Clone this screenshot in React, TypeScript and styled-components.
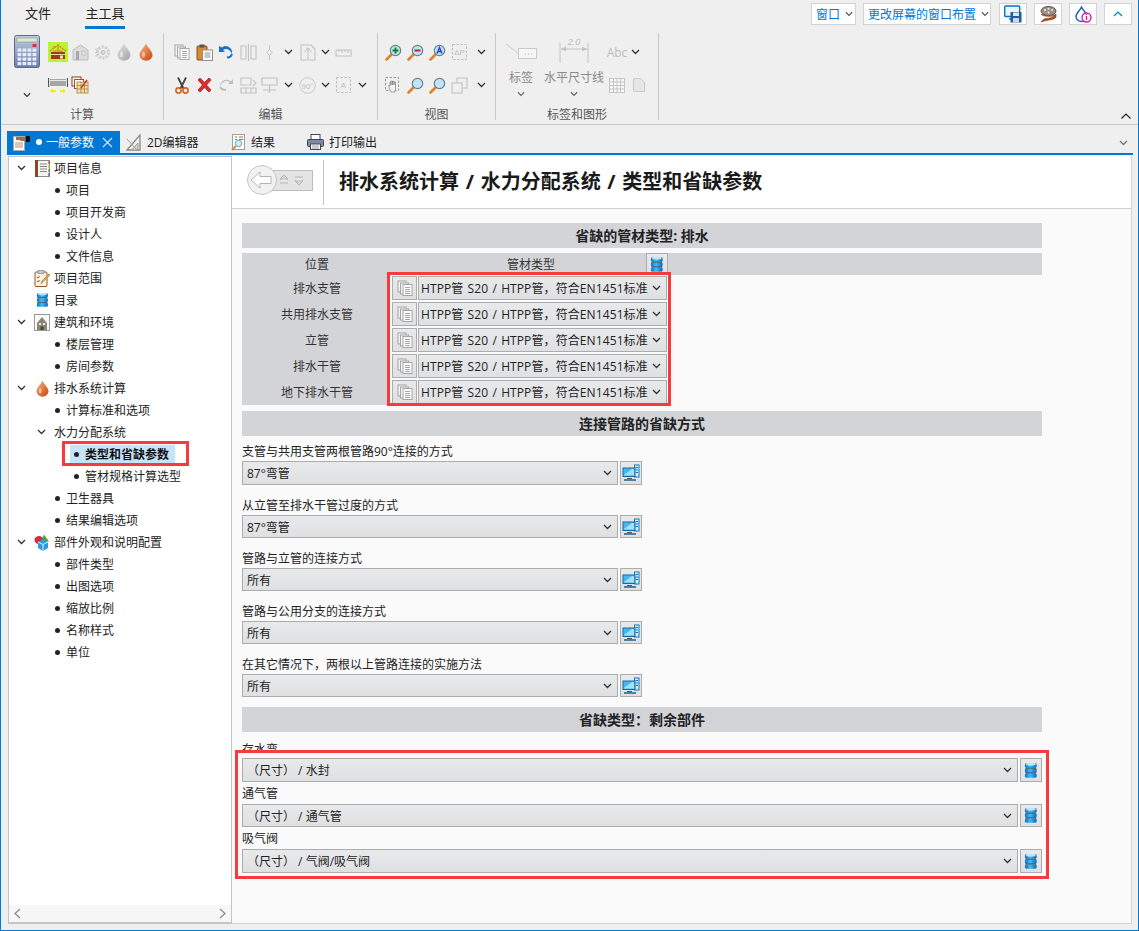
import React from 'react'
import styled, { createGlobalStyle } from 'styled-components'

const GlobalStyle = createGlobalStyle`
  html, body { margin: 0; padding: 0; background: #efefef; }
  body { font-family: "Open Sans", "Noto Sans CJK SC", sans-serif; font-size: 12px; color: #222; }
  * { box-sizing: border-box; }
  svg { display: block; flex: none; }
`

const Window = styled.div`
  width: 1139px;
  height: 931px;
  position: relative;
  border: 1px solid #0078d4;
  border-top: 0;
  background: #efefef;
  display: flex;
  flex-direction: column;
  overflow: hidden;
`

/* top menu */
const MenuBar = styled.div`
  height: 30px;
  display: flex;
  padding: 0 6px 0 24px;
  justify-content: space-between;
`
const MenuTabs = styled.div`
  display: flex;
  gap: 34px;
`
const MenuTab = styled.div<{ $active?: boolean }>`
  height: 29px;
  line-height: 27px;
  font-size: 13px;
  border-bottom: 3px solid ${p => (p.$active ? '#0078d4' : 'transparent')};
  width: ${p => (p.$active ? '40px' : '26px')};
  text-align: center;
  white-space: nowrap;
`
const TopActions = styled.div`
  display: flex;
  padding-top: 3px;
  gap: 7px;
`
const TopDrop = styled.div<{ $w: number; $last?: boolean }>`
  width: ${p => p.$w}px;
  height: 22px;
  margin-right: ${p => (p.$last ? '1px' : '0')};
  background: #fff;
  border: 1px solid #d3d3d3;
  color: #0078d4;
  display: flex;
  align-items: center;
  padding: 0 4px;
  gap: 5px;
  white-space: nowrap;
`
const TopIconBtn = styled.div`
  width: 28px;
  height: 22px;
  background: #fff;
  border: 1px solid #d3d3d3;
  display: flex;
  align-items: center;
  justify-content: center;
`

/* ribbon */
const Ribbon = styled.div`
  height: 95px;
  display: flex;
  border-bottom: 1px solid #c8c8c8;
  position: relative;
`
const RibbonGroup = styled.div<{ $w: number }>`
  width: ${p => p.$w}px;
  margin: 3px 0 4px;
  border-right: 1px solid #c8c8c8;
  display: flex;
  flex-direction: column;
`
const GroupBody = styled.div<{ $pad: number }>`
  height: 68px;
  flex: none;
  padding: 2px 0 0 ${p => p.$pad}px;
  display: flex;
`
const GroupLabel = styled.div`
  height: 16px;
  flex: none;
  margin-top: 6px;
  line-height: 16px;
  text-align: center;
  color: #555;
`
const IconGrid = styled.div<{ $cols: string; $left?: number }>`
  display: grid;
  grid-template-columns: ${p => p.$cols};
  grid-auto-rows: 22px;
  row-gap: 11px;
  margin: 6px 0 0 ${p => p.$left ?? 0}px;
  height: 55px;
`
const Slot = styled.div<{ $start?: boolean; $muted?: boolean }>`
  display: flex;
  align-items: center;
  justify-content: ${p => (p.$start ? 'flex-start' : 'center')};
  padding-left: ${p => (p.$start ? '3px' : '0')};
  color: ${p => (p.$muted ? '#bdbdbd' : 'inherit')};
`
const BigColumn = styled.div<{ $w: number }>`
  width: ${p => p.$w}px;
  display: flex;
  flex-direction: column;
  align-items: center;
  color: #8a8a8a;
  white-space: nowrap;
`
const BigIcon = styled.div`
  height: 32px;
  display: flex;
  align-items: center;
`
const BigText = styled.div`
  height: 20px;
  margin-top: 1px;
  line-height: 20px;
`
const BigChevron = styled.div<{ $gap?: number }>`
  height: 12px;
  margin-top: ${p => p.$gap ?? 0}px;
  display: flex;
  align-items: center;
`
const CollapseBtn = styled.div`
  position: absolute;
  right: 7px;
  bottom: 5px;
`

/* document tabs */
const TabBar = styled.div`
  margin: 6px 5px 0 6px;
  height: 24px;
  display: flex;
  align-items: flex-end;
  border-bottom: 2px solid #0078d4;
  position: relative;
`
const DocTab = styled.div<{ $w: number; $active?: boolean }>`
  width: ${p => p.$w}px;
  height: 22px;
  display: flex;
  align-items: center;
  gap: 5px;
  padding-left: 6px;
  white-space: nowrap;
  background: ${p => (p.$active ? '#0078d4' : 'transparent')};
  color: ${p => (p.$active ? '#fff' : '#222')};
`
const TabDot = styled.span`
  width: 6px;
  height: 6px;
  border-radius: 50%;
  background: #fff;
  margin-left: 1px;
  margin-right: -1px;
  flex: none;
`
const TabClose = styled.span`
  margin-left: 3px;
  display: flex;
`
const TabMenu = styled.div`
  position: absolute;
  right: 5px;
  bottom: 7px;
`

/* work area */
const Workspace = styled.div`
  flex: 1;
  display: flex;
  margin: 1px 5px 6px 7px;
  min-height: 0;
`
const Tree = styled.div`
  width: 224px;
  background: #fff;
  border: 1px solid #c4c4c4;
  border-width: 1px 1px 2px 1px;
  display: flex;
  flex-direction: column;
  justify-content: space-between;
`
const TreeRow = styled.div<{ $indent: number }>`
  height: 22px;
  display: flex;
  align-items: center;
  padding-left: ${p => p.$indent}px;
  white-space: nowrap;
`
const TreeChevron = styled.div`
  width: 12px;
  display: flex;
  justify-content: center;
`
const TreeIcon = styled.div`
  width: 18px;
  margin-left: 6px;
  margin-right: 3px;
  display: flex;
  justify-content: center;
`
const Bullet = styled.span`
  width: 5px;
  height: 5px;
  border-radius: 50%;
  background: #222;
  margin-right: 6px;
  flex: none;
`
const SubLabel = styled.span`
  margin-left: 7px;
`
const ActiveItem = styled.div`
  height: 19px;
  width: 105px;
  display: flex;
  align-items: center;
  padding-left: 4px;
  background: #c5e3f9;
  font-weight: 700;
  color: #111;
`
const HScroll = styled.div`
  height: 17px;
  background: #f7f7f7;
  display: flex;
  align-items: center;
  justify-content: space-between;
  padding: 0 5px;
`

const Main = styled.div`
  width: 900px;
  position: relative;
  background: #fafafa;
  border-right: 1px solid #d4d4d4;
  border-bottom: 1px solid #d4d4d4;
`
const Header = styled.div`
  height: 53px;
  background: #fff;
  border-bottom: 1px solid #cfcfcf;
  display: flex;
  align-items: center;
  padding: 0 0 4px 15px;
`
const HeaderDivider = styled.div`
  width: 1px;
  height: 45px;
  background: #c4c4c4;
  margin: 4px 15px 0 10px;
`
const Title = styled.h1`
  margin: 0;
  font-size: 20px;
  font-weight: 700;
  color: #1a1a1a;
  white-space: nowrap;
  word-spacing: 1.5px;
`
const Form = styled.div`
  width: 810px;
  padding: 14px 0 0 10px;
`
const SectionHead = styled.div`
  height: 25px;
  background: #d3d4d8;
  font-size: 14px;
  font-weight: 700;
  line-height: 25px;
  text-align: center;
  color: #222;
`
const TableHead = styled.div`
  margin-top: 5px;
  height: 22px;
  background: #d3d4d8;
  display: flex;
  align-items: center;
`
const HeadCell = styled.div<{ $w: number; $pad: number }>`
  width: ${p => p.$w}px;
  padding-left: ${p => p.$pad}px;
  text-align: center;
  color: #333;
`
const TableRow = styled.div`
  height: 26px;
  display: flex;
  align-items: center;
`
const RowLabel = styled.div`
  width: 145px;
  height: 26px;
  line-height: 27px;
  background: #d3d4d8;
  padding-left: 5px;
  margin-right: 5px;
  text-align: center;
  color: #333;
`
const SquareBtn = styled.div<{ $w: number; $h: number }>`
  width: ${p => p.$w}px;
  height: ${p => p.$h}px;
  border: 1px solid #acacac;
  background: linear-gradient(#e8e9eb, #dfe0e2);
  display: flex;
  align-items: center;
  justify-content: center;
  flex: none;
`
const Select = styled.div<{ $w: number; $h: number; $pad?: number; $left?: number }>`
  width: ${p => p.$w}px;
  height: ${p => p.$h}px;
  margin-left: ${p => p.$left ?? 0}px;
  border: 1px solid #acacac;
  background: linear-gradient(#e8e9eb, #dfe0e2);
  display: flex;
  align-items: center;
  justify-content: space-between;
  padding: 0 5px 0 ${p => p.$pad ?? 2}px;
  white-space: nowrap;
  color: #222;
  flex: none;
`
const PipeValue = styled.span`
  letter-spacing: 0.1px;
  word-spacing: 1px;
`
const FieldList = styled.div`
  padding-top: 6px;
  display: flex;
  flex-direction: column;
  gap: 11px;
  margin-bottom: 10px;
`
const FieldLabel = styled.div`
  height: 19px;
  line-height: 19px;
  color: #222;
`
const ControlRow = styled.div`
  display: flex;
  gap: 2px;
`
const WideList = styled.div`
  padding-top: 10px;
  display: flex;
  flex-direction: column;
  gap: 2px;
`
const WideLabel = styled.div`
  height: 20px;
  line-height: 20px;
`
const ClippedLabel = styled.div`
  height: 8px;
  margin-bottom: 8px;
  line-height: 16px;
  overflow: hidden;
`
const TableGap = styled.div`
  height: 6px;
`

/* red annotation frames drawn over the screenshot */
const RedFrame = styled.div<{ $l: number; $t: number; $w: number; $h: number }>`
  position: absolute;
  left: ${p => p.$l}px;
  top: ${p => p.$t}px;
  width: ${p => p.$w}px;
  height: ${p => p.$h}px;
  border: 3px solid #f73a3a;
  pointer-events: none;
`

/* icons */
const Chevron = ({ color = '#333', w = 9 }: { color?: string; w?: number }) => (
  <svg width={w} height="6" viewBox="0 0 9 6">
    <path d="M1 1l3.5 3.5L8 1" fill="none" stroke={color} strokeWidth="1.3" />
  </svg>
)

const DbIcon = ({ size = 17 }: { size?: number }) => (
  <svg width={size * 0.8} height={size} viewBox="0 0 14 17">
    <defs>
      <linearGradient id="dbg" x1="0" x2="1">
        <stop offset="0" stopColor="#0b6fcb" />
        <stop offset="0.45" stopColor="#3fbdf7" />
        <stop offset="1" stopColor="#0a66bd" />
      </linearGradient>
    </defs>
    <rect x="1" y="1" width="12" height="4.5" rx="1.5" fill="url(#dbg)" />
    <ellipse cx="7" cy="2" rx="5" ry="1.5" fill="#b5e9fd" />
    <rect x="1" y="6.5" width="12" height="4" rx="1" fill="url(#dbg)" />
    <rect x="1" y="11.5" width="12" height="4.5" rx="1.5" fill="url(#dbg)" />
    <path d="M1.500 6h11M1.500 11h11" stroke="#0d2f55" strokeWidth="1" />
  </svg>
)

const PcIcon = () => (
  <svg width="18" height="18" viewBox="0 0 18 18">
    <rect x="12.5" y="1" width="4.5" height="12" fill="#d9eefa" stroke="#1576b8" />
    <path d="M13.5 3.5h2.500M13.5 6h2.500M13.500 8.500h2.500" stroke="#1576b8" />
    <rect x="1" y="4" width="12" height="8.500" fill="#49b6ee" stroke="#0f6aa8" />
    <path d="M2 11l8-6h2v6.500H2z" fill="#a6e0f8" />
    <path d="M5 14h5v1H5z" fill="#555" />
    <path d="M2 16h12" stroke="#1b5f90" strokeWidth="1.500" />
  </svg>
)

const DocsIcon = ({ color = '#9a9a9a', w = 16 }: { color?: string; w?: number }) => (
  <svg width={w} height={w} viewBox="0 0 16 16">
    <rect x="1" y="1" width="8" height="11" fill="#f2f2f2" stroke={color} />
    <rect x="3.500" y="3" width="8" height="11" fill="#f5f5f5" stroke={color} />
    <rect x="6" y="4.500" width="9" height="11" fill="#fff" stroke={color} />
    <path d="M8 7.500h5M8 9.500h5M8 11.500h5M8 13.500h5" stroke={color} />
  </svg>
)

const Drop = ({ c1, c2, w = 14, h = 18 }: { c1: string; c2: string; w?: number; h?: number }) => (
  <svg width={w} height={h} viewBox="0 0 14 18">
    <defs>
      <linearGradient id={`drop${c1.slice(1)}`} x1="0" y1="0" x2="0.800" y2="1">
        <stop offset="0" stopColor={c1} />
        <stop offset="1" stopColor={c2} />
      </linearGradient>
    </defs>
    <path d="M7 0.500C8 4 13.500 8 13.500 12a6.500 5.800 0 0 1-13 0C0.500 8 6 4 7 0.500z" fill={`url(#drop${c1.slice(1)})`} />
    <ellipse cx="4.500" cy="11.500" rx="1.500" ry="3" fill="#fff" opacity="0.500" />
  </svg>
)

const CalcIcon = () => (
  <svg width="26" height="33" viewBox="0 0 26 33">
    <defs>
      <linearGradient id="calc" x1="0" y1="0" x2="0" y2="1">
        <stop offset="0" stopColor="#c3cde0" />
        <stop offset="1" stopColor="#6a7cab" />
      </linearGradient>
    </defs>
    <rect x="0.500" y="0.500" width="25" height="32" rx="2" fill="url(#calc)" stroke="#5a6a94" />
    <rect x="3" y="3" width="20" height="4" fill="#dfe8d8" stroke="#7d8a78" strokeWidth="0.500" />
    <rect x="18.500" y="9" width="4" height="3" fill="#d93434" />
    {[0, 1, 2, 3].map(r =>
      [0, 1, 2, 3].map(c => (
        <rect key={`${r}-${c}`} x={3.500 + c * 5} y={13.500 + r * 4.500} width="3.800" height="3.200" fill="#e8ecf6" />
      )),
    )}
  </svg>
)

const HouseIcon = () => (
  <svg width="20" height="20" viewBox="0 0 20 20">
    <rect width="20" height="20" fill="#b7f52e" />
    <path d="M2 9l8-6 8 6" fill="none" stroke="#d8781e" strokeWidth="1.200" strokeDasharray="2 1" />
    <path d="M6 6v-2M10 3v6M5 9h10" stroke="#d8781e" />
    <rect x="3" y="10" width="14" height="7" fill="#a1391c" />
    <rect x="3" y="12" width="14" height="1" fill="#e9d9a8" />
    <rect x="12" y="13.500" width="3" height="3" fill="#f5e8b8" />
  </svg>
)

const GrayHouse = () => (
  <svg width="17" height="17" viewBox="0 0 17 17">
    <path d="M1 6l7.500-5L16 6v10H1z" fill="#dcdcdc" stroke="#bdbdbd" />
    <rect x="4" y="7" width="3" height="9" fill="#a9a9a9" />
    <rect x="10" y="7" width="3" height="4" fill="#f2f2f2" stroke="#bdbdbd" />
  </svg>
)

const GrayGear = () => (
  <svg width="17" height="17" viewBox="0 0 17 17">
    <circle cx="9" cy="8.500" r="5.500" fill="none" stroke="#cfcfcf" strokeWidth="3" strokeDasharray="2.200 1.200" />
    <circle cx="9" cy="8.500" r="2" fill="#dedede" stroke="#bbb" />
    <path d="M1 5h3M1 8.500h3M1 12h3" stroke="#c6c6c6" />
  </svg>
)

const PipeIcon = () => (
  <svg width="20" height="20" viewBox="0 0 20 20">
    <rect x="2" y="4" width="16" height="7" fill="#a6a6a6" />
    <path d="M2 5.500h16" stroke="#e8e8e8" />
    <path d="M0.500 3v9M19.500 3v9" stroke="#555" strokeWidth="1.200" />
    <path d="M2 16l3-2.500v1.500h3v2H5v1.500zM18 16l-3-2.500v1.500h-3v2h3v1.500z" fill="#f4ea1c" />
  </svg>
)

const SheetIcon = () => (
  <svg width="18" height="18" viewBox="0 0 18 18">
    <rect x="1" y="1" width="9" height="9" fill="#fff" stroke="#8a3a2a" />
    <rect x="3.500" y="3.500" width="9" height="9" fill="#fff" stroke="#a5502a" />
    <rect x="6" y="6" width="11" height="11" fill="#f6e2a2" stroke="#b5905a" />
    <path d="M6 9.500h11M6 13h11M10 6v11M13.500 6v11" stroke="#b5905a" />
    <path d="M10 12l6-8" stroke="#c7382a" strokeWidth="1.500" />
  </svg>
)

const PasteIcon = () => (
  <svg width="17" height="17" viewBox="0 0 17 17">
    <rect x="1" y="2" width="10" height="14" rx="1" fill="#d98b34" stroke="#8c4d13" />
    <rect x="3.500" y="0.500" width="5" height="3" fill="#555" />
    <rect x="6.500" y="6" width="10" height="10.500" fill="#fff" stroke="#8f8f8f" />
    <path d="M8.500 9h6M8.500 11h6M8.500 13h6" stroke="#8f8f8f" />
  </svg>
)

const UndoIcon = ({ gray }: { gray?: boolean }) => (
  <svg width="17" height="14" viewBox="0 0 17 14">
    <path
      d={gray ? 'M15 1v5h-5l2-2C9 2 4 3 2 9c0-5 4-8 8-7 1 0 2 .5 3 1.500z' : 'M1 1v6h6L5 5c3-2 7-1 9 4 1-5-3-8-7-8-1 0-2 .5-3 1.500z'}
      fill={gray ? '#bdbdbd' : '#1a6fc9'}
    />
    <path
      d={gray ? 'M2 9c1 2 3 3 6 3' : 'M14 9c-.5 2-2 3.500-5 3.500'}
      fill="none"
      stroke={gray ? '#bdbdbd' : '#1a6fc9'}
      strokeWidth="2"
    />
  </svg>
)

const ScissorIcon = () => (
  <svg width="14" height="17" viewBox="0 0 14 17">
    <path d="M3 0.500l5.500 11M11 0.500l-5.500 11" stroke="#444" strokeWidth="1.800" />
    <circle cx="3.500" cy="13.500" r="2.600" fill="none" stroke="#d6661a" strokeWidth="1.600" />
    <circle cx="10.500" cy="13.500" r="2.600" fill="none" stroke="#d6661a" strokeWidth="1.600" />
  </svg>
)

const RedX = () => (
  <svg width="17" height="16" viewBox="0 0 17 16">
    <path d="M2 3l2-2 4.500 4.500L13 1l2 2-4.500 5 4.500 5-2 2-4.500-4.500L4 15l-2-2 4.500-5z" fill="#dc2d2d" stroke="#a81c1c" strokeWidth="0.800" />
  </svg>
)

const Dashed = ({ mark }: { mark?: string }) => (
  <svg width="15" height="16" viewBox="0 0 15 16">
    <rect x="0.500" y="0.500" width="14" height="15" fill="none" stroke="#bdbdbd" strokeDasharray="2.500 1.500" />
    {mark && (
      <text x="7.500" y="11" textAnchor="middle" fontSize="8" fill="#bdbdbd" fontFamily="Liberation Sans, sans-serif">
        {mark}
      </text>
    )}
  </svg>
)

const HandSelect = () => (
  <svg width="16" height="16" viewBox="0 0 16 16">
    <rect x="0.500" y="0.500" width="13" height="13" fill="none" stroke="#9a9a9a" strokeDasharray="2.500 1.500" />
    <path d="M6 15l-2-4V8l1 1V5l1 0v3-4h1.500v4-3.500H9V8V5h1.500v6L10 15z" fill="#f4f4f4" stroke="#8a8a8a" strokeWidth="0.800" />
  </svg>
)

const NinetyIcon = () => (
  <svg width="17" height="17" viewBox="0 0 17 17">
    <circle cx="8.500" cy="8.500" r="7.800" fill="none" stroke="#c8c8c8" />
    <text x="8.500" y="11.500" textAnchor="middle" fontSize="7.500" fill="#c2c2c2" fontFamily="Liberation Sans, sans-serif">
      90°
    </text>
  </svg>
)

const GrayGlyph = ({ d, w = 17 }: { d: string; w?: number }) => (
  <svg width={w} height="17" viewBox="0 0 17 17">
    <path d={d} fill="none" stroke="#c2c2c2" strokeWidth="1.100" />
  </svg>
)

const Zoom = ({ mark, glass = '#bfe3f7' }: { mark?: React.ReactNode; glass?: string }) => (
  <svg width="17" height="17" viewBox="0 0 17 17">
    <path d="M1.500 15.500l5-5" stroke="#e0802a" strokeWidth="2.600" strokeLinecap="round" />
    <circle cx="10.500" cy="6.500" r="5.200" fill={glass} stroke="#6f7f8a" strokeWidth="1.200" />
    {mark}
  </svg>
)

const BookIcon = () => (
  <svg width="15" height="17" viewBox="0 0 15 17">
    <rect x="0.500" y="0.500" width="14" height="16" fill="#f6f6f6" stroke="#8b8b8b" />
    <rect x="0" y="0" width="3" height="17" fill="#8b4a1e" />
    <path d="M5 4h7M5 6.500h7M5 9h7M5 11.500h7" stroke="#888" />
    <path d="M14 1v3" stroke="#d13b3b" strokeWidth="1.200" />
    <path d="M14 5v3" stroke="#e0b020" strokeWidth="1.200" />
    <path d="M14 9v3" stroke="#3b9a3b" strokeWidth="1.200" />
    <path d="M14 13v3" stroke="#7a3bb0" strokeWidth="1.200" />
  </svg>
)

const ClipboardIcon = () => (
  <svg width="17" height="17" viewBox="0 0 17 17">
    <rect x="1" y="2" width="12" height="14.500" rx="1" fill="#fbf3e2" stroke="#8d5a2a" />
    <rect x="4" y="0.500" width="6" height="3" fill="#c9c9c9" stroke="#777" strokeWidth="0.600" />
    <path d="M3 7l1 1 1.500-2M3 11l1 1 1.500-2" fill="none" stroke="#c7382a" />
    <path d="M7 14l1-3 7-7 1 1-7 7z" fill="#eab23a" stroke="#a8741c" strokeWidth="0.600" />
  </svg>
)

const BuildingIcon = () => (
  <svg width="16" height="17" viewBox="0 0 16 17">
    <rect x="0.500" y="0.500" width="15" height="16" fill="#fafafa" stroke="#9a9a9a" />
    <path d="M3 9l5-6 5 6v7H3z" fill="#8c8478" />
    <rect x="5" y="9" width="2" height="2" fill="#eee" />
    <rect x="9" y="9" width="2" height="2" fill="#eee" />
    <rect x="6.500" y="12.500" width="3" height="3.500" fill="#4b4439" />
  </svg>
)

const PartsIcon = () => (
  <svg width="17" height="17" viewBox="0 0 17 17">
    <ellipse cx="5" cy="6" rx="4.500" ry="4" fill="#d22f3a" />
    <path d="M10 0.500l5 7h-8z" fill="#39a94a" />
    <path d="M4 8l5-2.500L14 8v6l-5 3-5-3z" fill="#2f9ae0" />
    <path d="M4 8l5 2.500L14 8M9 10.500V17" stroke="#d5eefb" fill="none" />
  </svg>
)

const HandDocIcon = () => (
  <svg width="17" height="17" viewBox="0 0 17 17">
    <rect x="0.500" y="2.500" width="11" height="14" fill="#fff" stroke="#aaa" />
    <path d="M2 9h8M2 11h8M2 13h8" stroke="#c08a6a" />
    <path d="M3 3h9v4H8L6 6H3z" fill="#a86a42" />
    <rect x="13" y="2" width="4" height="6" fill="#111" />
  </svg>
)

const SetSquareIcon = () => (
  <svg width="16" height="17" viewBox="0 0 16 17">
    <path d="M1 16L14 1v15z" fill="none" stroke="#8b8b8b" strokeWidth="1.300" />
    <path d="M6 16l6-7v7z" fill="#d9d9d9" stroke="#9a9a9a" />
    <path d="M1 5l10 11" stroke="#b3a05a" />
  </svg>
)

const ResultIcon = () => (
  <svg width="15" height="17" viewBox="0 0 15 17">
    <rect x="1.500" y="0.500" width="12" height="15" fill="#fff" stroke="#a0a0a0" />
    <path d="M4 3h2M8 3h4M4 5.500h2M8 5.500h4" stroke="#c65a4a" />
    <circle cx="7.500" cy="9.500" r="3.200" fill="#cfe9f8" stroke="#7aa4c0" />
    <path d="M5 12l-4 4" stroke="#d98b34" strokeWidth="2" />
  </svg>
)

const PrinterIcon = () => (
  <svg width="17" height="16" viewBox="0 0 17 16">
    <rect x="4" y="0.500" width="9" height="5" fill="#fff" stroke="#445" />
    <rect x="0.500" y="5.500" width="16" height="7" rx="1" fill="#7d8aa0" stroke="#3c4658" />
    <rect x="3.500" y="10" width="10" height="5.500" fill="#fff" stroke="#445" />
    <path d="M5 12h7M5 14h7" stroke="#999" />
  </svg>
)

const SaveScreenIcon = () => (
  <svg width="18" height="18" viewBox="0 0 18 18">
    <rect x="0.700" y="1" width="15" height="10.500" rx="1" fill="#eaf6fd" stroke="#0a72c2" strokeWidth="1.400" />
    <path d="M5 14h4" stroke="#0a72c2" strokeWidth="1.400" />
    <rect x="6.500" y="7" width="11" height="10.500" fill="#1f5f99" />
    <rect x="9" y="7.500" width="6" height="3.500" fill="#dbe9f5" />
    <rect x="9" y="13" width="6" height="4.500" fill="#cfd8e0" />
  </svg>
)

const ReelIcon = () => (
  <svg width="17" height="17" viewBox="0 0 17 17">
    <ellipse cx="8.500" cy="5" rx="7.500" ry="4.500" fill="#9d8f85" stroke="#555" />
    <circle cx="5" cy="4" r="1" fill="#eee" />
    <circle cx="8.500" cy="2.800" r="1" fill="#eee" />
    <circle cx="12" cy="4" r="1" fill="#eee" />
    <circle cx="8.500" cy="6.500" r="1" fill="#eee" />
    <path d="M1 8c2 3 11 3 15 0v3c-1 3-9 3-12 4l-3 1 3-3c4-1 8-1 10-2" fill="#a4521c" stroke="#8a4214" strokeWidth="0.700" />
  </svg>
)

const InfoDropIcon = () => (
  <svg width="17" height="17" viewBox="0 0 17 17">
    <path d="M6.500 1C7.500 4 12 7 12 10.500a5.500 5 0 0 1-11 0C1 7 5.500 4 6.500 1z" fill="none" stroke="#2060c0" strokeWidth="1.400" />
    <circle cx="11.500" cy="11.500" r="4.500" fill="#fff" stroke="#d6209a" strokeWidth="1.400" />
    <path d="M11.500 10v4M11.500 8v1" stroke="#d6209a" strokeWidth="1.400" />
  </svg>
)

const NavBack = () => (
  <svg width="66" height="30" viewBox="0 0 66 30">
    <rect x="20.500" y="5.500" width="45" height="20" fill="#e4e4e4" stroke="#bcbcbc" />
    <circle cx="15" cy="15" r="14.500" fill="#f1f1f1" stroke="#c4c4c4" />
    <path d="M4 15l9-8v4.500h11v7H13V23z" fill="#fff" stroke="#b5b5b5" />
    <path d="M33 14l4-4 4 4zM33 15.500l4-4 4 4M33 18h8" fill="#f2f2f2" stroke="#b5b5b5" />
    <path d="M48 16l4 4 4-4zM48 14.500l4 4 4-4M48 12h8" fill="#f2f2f2" stroke="#b5b5b5" />
  </svg>
)

const LeaderIcon = () => (
  <svg width="33" height="17" viewBox="0 0 33 17">
    <path d="M1 1l13 10" stroke="#c9c9c9" />
    <rect x="13.500" y="5.500" width="18" height="10" fill="#f6f6f6" stroke="#c9c9c9" />
    <path d="M20 11h1M23 11h1M26 11h1" stroke="#aaa" />
  </svg>
)

const DimensionIcon = () => (
  <svg width="30" height="26" viewBox="0 0 30 26">
    <path d="M1 5v20M29 5v20M2 11h26" stroke="#c2c2c2" />
    <path d="M2 11l5-2.500v5zM28 11l-5-2.500v5z" fill="#c2c2c2" />
    <text x="15" y="7" textAnchor="middle" fontSize="9" fontStyle="italic" fill="#bdbdbd" fontFamily="Liberation Sans, sans-serif">2.0</text>
  </svg>
)

const TableIcon = () => (
  <svg width="16" height="15" viewBox="0 0 16 15">
    <rect x="0.500" y="0.500" width="15" height="14" fill="#f7f7f7" stroke="#c6c6c6" />
    <path d="M0 4h16M0 7.500h16M0 11h16M4.500 0v15M8 0v15M11.500 0v15" stroke="#c6c6c6" />
  </svg>
)

const PageIcon = () => (
  <svg width="12" height="14" viewBox="0 0 12 14">
    <path d="M0.500 0.500h7l4 4v9h-11z" fill="#e6e6e6" stroke="#c9c9c9" />
  </svg>
)

const CloseX = () => (
  <svg width="11" height="11" viewBox="0 0 11 11">
    <path d="M1 1l9 9M10 1l-9 9" stroke="#d6ebfa" strokeWidth="1.100" />
  </svg>
)

const ArrowSide = ({ dir }: { dir: 'l' | 'r' }) => (
  <svg width="7" height="11" viewBox="0 0 7 11">
    <path d={dir === 'l' ? 'M6 1L1 5.500 6 10' : 'M1 1l5 4.500L1 10'} fill="none" stroke="#888" strokeWidth="1.200" />
  </svg>
)

const EDIT_COLS = '22px 22px 22px 22px 20px 18px 20px 16px 20px 18px'
const VIEW_COLS = '22px 22px 22px 22px 22px'

const treeTop = [
  { t: 0, label: '项目信息', open: true, icon: <BookIcon /> },
  { t: 1, label: '项目' },
  { t: 1, label: '项目开发商' },
  { t: 1, label: '设计人' },
  { t: 1, label: '文件信息' },
  { t: 0, label: '项目范围', icon: <ClipboardIcon /> },
  { t: 0, label: '目录', icon: <DbIcon size={16} /> },
  { t: 0, label: '建筑和环境', open: true, icon: <BuildingIcon /> },
  { t: 1, label: '楼层管理' },
  { t: 1, label: '房间参数' },
  { t: 0, label: '排水系统计算', open: true, icon: <Drop c1="#f6b486" c2="#cf4e12" w={13} h={17} /> },
  { t: 1, label: '计算标准和选项' },
]
const treeBottom = [
  { t: 1, label: '卫生器具' },
  { t: 1, label: '结果编辑选项' },
  { t: 0, label: '部件外观和说明配置', open: true, icon: <PartsIcon /> },
  { t: 1, label: '部件类型' },
  { t: 1, label: '出图选项' },
  { t: 1, label: '缩放比例' },
  { t: 1, label: '名称样式' },
  { t: 1, label: '单位' },
]

const renderTreeItem = (item: { t: number; label: string; open?: boolean; icon?: React.ReactNode }) =>
  item.t === 0 ? (
    <TreeRow key={item.label} $indent={6}>
      <TreeChevron>{item.open && <Chevron />}</TreeChevron>
      <TreeIcon>{item.icon}</TreeIcon>
      {item.label}
    </TreeRow>
  ) : (
    <TreeRow key={item.label} $indent={46}>
      <Bullet />
      {item.label}
    </TreeRow>
  )

const pipeRows = ['排水支管', '共用排水支管', '立管', '排水干管', '地下排水干管']
const PIPE_TEXT = 'HTPP管 S20 / HTPP管，符合EN1451标准'

const connFields = [
  { label: '支管与共用支管两根管路90°连接的方式', value: '87°弯管', h: 24 },
  { label: '从立管至排水干管过度的方式', value: '87°弯管', h: 23 },
  { label: '管路与立管的连接方式', value: '所有', h: 23 },
  { label: '管路与公用分支的连接方式', value: '所有', h: 23 },
  { label: '在其它情况下，两根以上管路连接的实施方法', value: '所有', h: 23 },
]

const App = () => (
  <Window>
    <GlobalStyle />
    <MenuBar>
      <MenuTabs>
        <MenuTab>文件</MenuTab>
        <MenuTab $active>主工具</MenuTab>
      </MenuTabs>
      <TopActions>
        <TopDrop $w={45}>
          窗口
          <Chevron color="#555" w={8} />
        </TopDrop>
        <TopDrop $w={128} $last>
          更改屏幕的窗口布置
          <Chevron color="#555" w={8} />
        </TopDrop>
        <TopIconBtn>
          <SaveScreenIcon />
        </TopIconBtn>
        <TopIconBtn>
          <ReelIcon />
        </TopIconBtn>
        <TopIconBtn>
          <InfoDropIcon />
        </TopIconBtn>
        <TopIconBtn>
          <svg width="10" height="6" viewBox="0 0 10 6">
            <path d="M1 5l4-4 4 4" fill="none" stroke="#0078d4" strokeWidth="1.200" />
          </svg>
        </TopIconBtn>
      </TopActions>
    </MenuBar>

    <Ribbon>
      <RibbonGroup $w={163}>
        <GroupBody $pad={13}>
          <BigColumn $w={26}>
            <CalcIcon />
            <BigChevron $gap={21}>
              <Chevron w={8} />
            </BigChevron>
          </BigColumn>
          <IconGrid $cols="7px 22px 22px 22px 22px 22px">
            <Slot />
            <Slot><HouseIcon /></Slot>
            <Slot><GrayHouse /></Slot>
            <Slot><GrayGear /></Slot>
            <Slot><Drop c1="#e2e2e2" c2="#a9a9a9" /></Slot>
            <Slot><Drop c1="#f6b486" c2="#cf4e12" /></Slot>
            <Slot />
            <Slot><PipeIcon /></Slot>
            <Slot><SheetIcon /></Slot>
          </IconGrid>
        </GroupBody>
        <GroupLabel>计算</GroupLabel>
      </RibbonGroup>

      <RibbonGroup $w={214}>
        <GroupBody $pad={7}>
          <IconGrid $cols={EDIT_COLS}>
            <Slot><DocsIcon color="#a8a8a8" /></Slot>
            <Slot><PasteIcon /></Slot>
            <Slot><UndoIcon /></Slot>
            <Slot><GrayGlyph d="M1 2h5v13H1zM11 2h5v13h-5zM8.500 0v17" /></Slot>
            <Slot><GrayGlyph d="M8.500 0v5M8.500 12v5M8.500 5l3 3.500-3 3.500-3-3.500z" w={15} /></Slot>
            <Slot><Chevron /></Slot>
            <Slot><GrayGlyph d="M2 1h10l4 4v11H2zM9 15V5M5.500 8L9 4l3.500 4" /></Slot>
            <Slot><Chevron /></Slot>
            <Slot><GrayGlyph d="M1 6h15v6H1zM4 6v2M7 6v3M10 6v2M13 6v3" /></Slot>
            <Slot />
            <Slot><ScissorIcon /></Slot>
            <Slot><RedX /></Slot>
            <Slot><UndoIcon gray /></Slot>
            <Slot><GrayGlyph d="M1 1h10v7H1zM1 11h15v5H1zM6 11v5M11 11v5M13 3l3 3-3 3" /></Slot>
            <Slot><GrayGlyph d="M1 1h15v7H1zM8.500 8v8M2 13h13" /></Slot>
            <Slot><Chevron /></Slot>
            <Slot><NinetyIcon /></Slot>
            <Slot><Chevron /></Slot>
            <Slot><Dashed mark="A" /></Slot>
            <Slot><Chevron /></Slot>
          </IconGrid>
        </GroupBody>
        <GroupLabel>编辑</GroupLabel>
      </RibbonGroup>

      <RibbonGroup $w={118}>
        <GroupBody $pad={4}>
          <IconGrid $cols={VIEW_COLS}>
            <Slot>
              <Zoom mark={<path d="M7.500 6.500h6M10.500 3.500v6" stroke="#0a8a2a" strokeWidth="2" />} />
            </Slot>
            <Slot>
              <Zoom mark={<path d="M7.500 6.500h6" stroke="#c2202a" strokeWidth="2" />} />
            </Slot>
            <Slot>
              <Zoom mark={<path d="M8 9.500l2.500-6 2.500 6M9 7.500h3" stroke="#2244c8" strokeWidth="1.400" fill="none" />} />
            </Slot>
            <Slot><Dashed mark="ΔP" /></Slot>
            <Slot><Chevron /></Slot>
            <Slot><HandSelect /></Slot>
            <Slot><Zoom /></Slot>
            <Slot><Zoom /></Slot>
            <Slot><GrayGlyph d="M1 6h10v10H1zM6 6V1h10v10h-5" /></Slot>
            <Slot><Chevron /></Slot>
          </IconGrid>
        </GroupBody>
        <GroupLabel>视图</GroupLabel>
      </RibbonGroup>

      <RibbonGroup $w={163}>
        <GroupBody $pad={1}>
          <BigColumn $w={48}>
            <BigIcon><LeaderIcon /></BigIcon>
            <BigText>标签</BigText>
            <BigChevron><Chevron color="#666" w={8} /></BigChevron>
          </BigColumn>
          <BigColumn $w={58}>
            <BigIcon><DimensionIcon /></BigIcon>
            <BigText>水平尺寸线</BigText>
            <BigChevron><Chevron color="#666" w={8} /></BigChevron>
          </BigColumn>
          <IconGrid $cols="22px 22px" $left={3}>
            <Slot $muted>Abc</Slot>
            <Slot $start><Chevron /></Slot>
            <Slot><TableIcon /></Slot>
            <Slot><PageIcon /></Slot>
          </IconGrid>
        </GroupBody>
        <GroupLabel>标签和图形</GroupLabel>
      </RibbonGroup>

      <CollapseBtn>
        <svg width="10" height="6" viewBox="0 0 10 6">
          <path d="M0.500 5.500L5 1l4.500 4.500" fill="none" stroke="#222" strokeWidth="1.200" />
        </svg>
      </CollapseBtn>
    </Ribbon>

    <TabBar>
      <DocTab $w={113} $active>
        <HandDocIcon />
        <TabDot />
        一般参数
        <TabClose><CloseX /></TabClose>
      </DocTab>
      <DocTab $w={105}>
        <SetSquareIcon />
        2D编辑器
      </DocTab>
      <DocTab $w={76}>
        <ResultIcon />
        结果
      </DocTab>
      <DocTab $w={90}>
        <PrinterIcon />
        打印输出
      </DocTab>
      <TabMenu><Chevron color="#777" w={9} /></TabMenu>
    </TabBar>

    <Workspace>
      <Tree>
        <div>
          {treeTop.map(renderTreeItem)}
          <TreeRow $indent={26}>
            <TreeChevron><Chevron /></TreeChevron>
            <SubLabel>水力分配系统</SubLabel>
          </TreeRow>
          <TreeRow $indent={61}>
            <ActiveItem>
              <Bullet />
              类型和省缺参数
            </ActiveItem>
          </TreeRow>
          <TreeRow $indent={65}>
            <Bullet />
            管材规格计算选型
          </TreeRow>
          {treeBottom.map(renderTreeItem)}
        </div>
        <HScroll>
          <ArrowSide dir="l" />
          <ArrowSide dir="r" />
        </HScroll>
      </Tree>

      <Main>
        <Header>
          <NavBack />
          <HeaderDivider />
          <Title>排水系统计算 / 水力分配系统 / 类型和省缺参数</Title>
        </Header>
        <Form>
          <SectionHead>省缺的管材类型: 排水</SectionHead>
          <TableHead>
            <HeadCell $w={150} $pad={0}>位置</HeadCell>
            <HeadCell $w={254} $pad={24}>管材类型</HeadCell>
            <SquareBtn $w={22} $h={22}><DbIcon size={17} /></SquareBtn>
          </TableHead>
          {pipeRows.map(label => (
            <TableRow key={label}>
              <RowLabel>{label}</RowLabel>
              <SquareBtn $w={25} $h={24}><DocsIcon color="#a4a4a4" /></SquareBtn>
              <Select $w={249} $h={24} $left={1}>
                <PipeValue>{PIPE_TEXT}</PipeValue>
                <Chevron />
              </Select>
            </TableRow>
          ))}
          <TableGap />
          <SectionHead>连接管路的省缺方式</SectionHead>
          <FieldList>
            {connFields.map(f => (
              <div key={f.label}>
                <FieldLabel>{f.label}</FieldLabel>
                <ControlRow>
                  <Select $w={376} $h={f.h} $pad={4}>
                    {f.value}
                    <Chevron />
                  </Select>
                  <SquareBtn $w={22} $h={f.h}><PcIcon /></SquareBtn>
                </ControlRow>
              </div>
            ))}
          </FieldList>
          <SectionHead>省缺类型：剩余部件</SectionHead>
          <WideList>
            <div>
              <ClippedLabel>存水弯</ClippedLabel>
              <ControlRow>
                <Select $w={776} $h={24} $pad={4}>
                  （尺寸） / 水封
                  <Chevron />
                </Select>
                <SquareBtn $w={22} $h={24}><DbIcon /></SquareBtn>
              </ControlRow>
            </div>
            <div>
              <WideLabel>通气管</WideLabel>
              <ControlRow>
                <Select $w={776} $h={23} $pad={4}>
                  （尺寸） / 通气管
                  <Chevron />
                </Select>
                <SquareBtn $w={22} $h={23}><DbIcon /></SquareBtn>
              </ControlRow>
            </div>
            <div>
              <WideLabel>吸气阀</WideLabel>
              <ControlRow>
                <Select $w={776} $h={24} $pad={4}>
                  （尺寸） / 气阀/吸气阀
                  <Chevron />
                </Select>
                <SquareBtn $w={22} $h={24}><DbIcon /></SquareBtn>
              </ControlRow>
            </div>
          </WideList>
        </Form>
        <RedFrame $l={155} $t={116} $w={284} $h={134} />
        <RedFrame $l={3} $t={594} $w={814} $h={129} />
      </Main>
      <RedFrame $l={61} $t={441} $w={127} $h={25} />
    </Workspace>
  </Window>
)

export default App
